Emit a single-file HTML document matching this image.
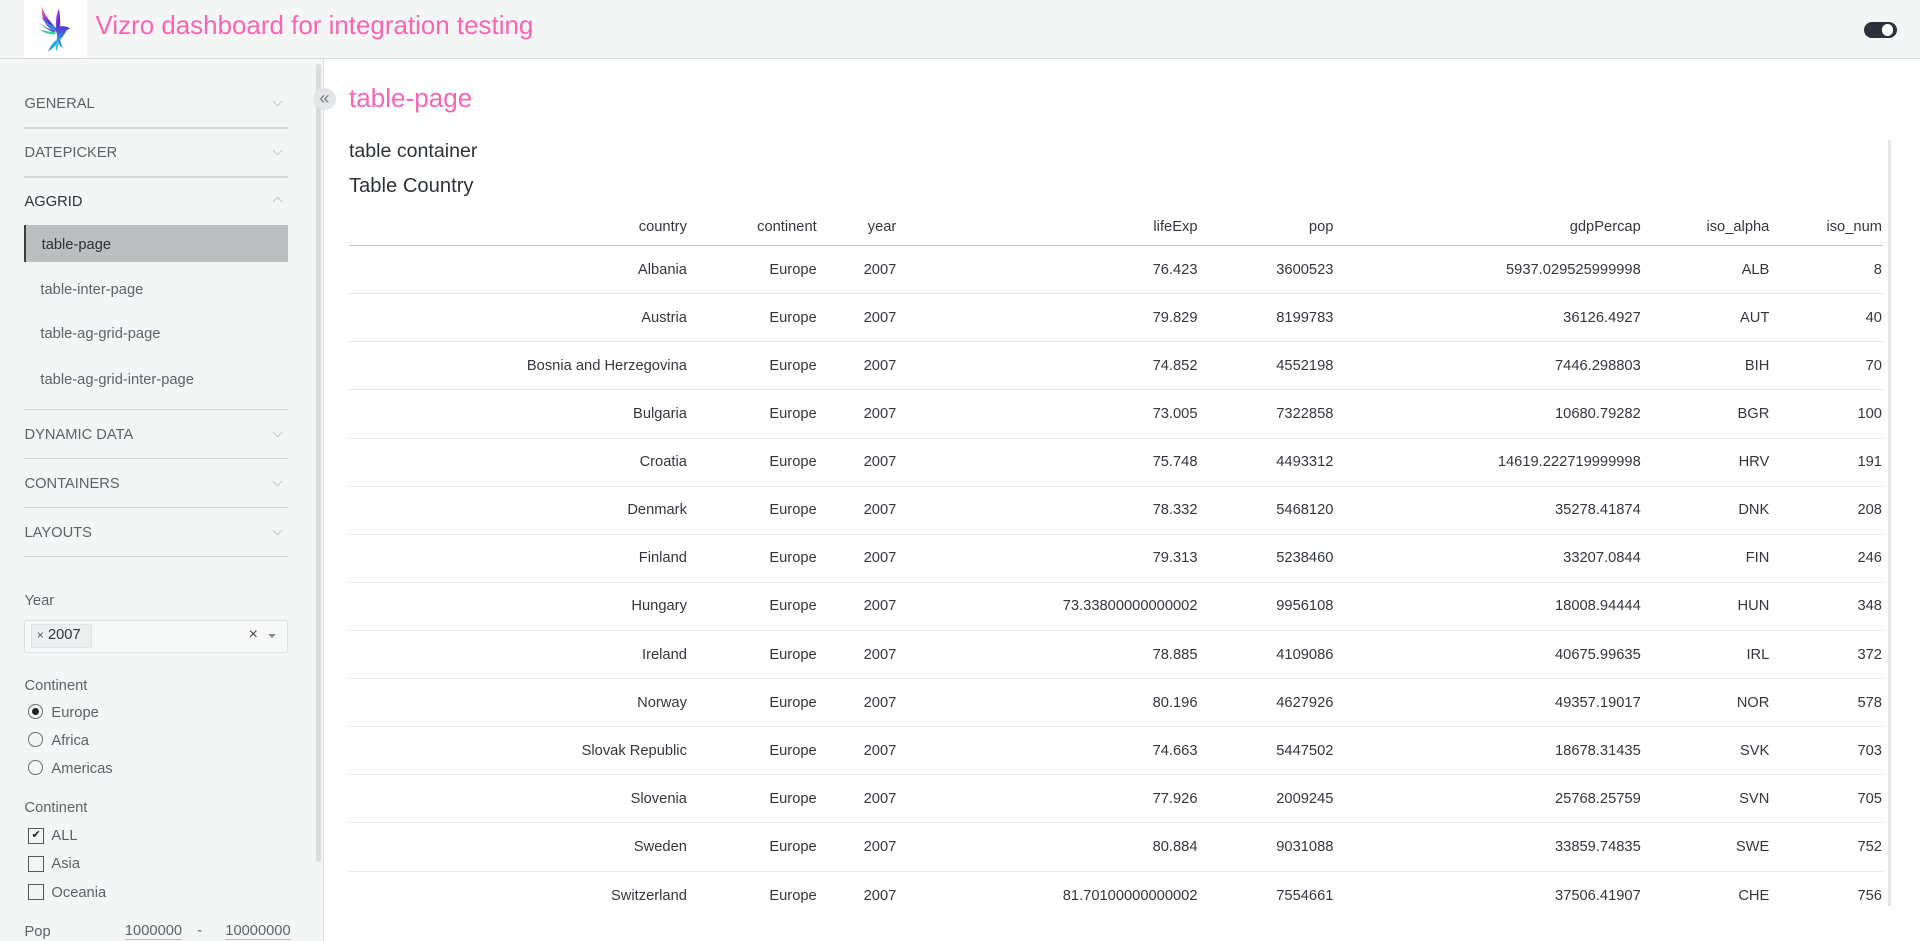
<!DOCTYPE html>
<html><head><meta charset="utf-8">
<style>
html,body{margin:0;padding:0;width:1920px;height:941px;overflow:hidden;background:#fff;}
#w{zoom:1.2245;width:1568px;height:769px;position:relative;font-family:"Liberation Sans",sans-serif;color:#33373d;overflow:hidden;}
.a{position:absolute;white-space:nowrap;}
#hdr{left:0;top:0;width:1568px;height:47px;background:#f4f5f5;border-bottom:1px solid #d8dadc;}
#side{left:0;top:48px;width:264px;height:721px;background:#f4f5f5;border-right:1px solid #dcdee0;}
.nav{left:20px;font-size:12px;color:#5d6168;transform:translateY(-50%);}
.ln{left:20px;width:215px;height:1px;background:#d5d7d9;}
.chev{left:224px;width:5px;height:5px;border-right:1px solid #c3c6ca;border-bottom:1px solid #c3c6ca;transform:rotate(45deg);}
.sub{left:33px;font-size:12px;color:#5d6168;transform:translateY(-50%);}
.lbl{left:20px;font-size:12px;color:#5d6168;transform:translateY(-50%);}
.opt{left:42px;font-size:12px;color:#5d6168;transform:translateY(-50%);}
.rad{left:23px;width:12px;height:12px;border:1px solid #6b6f76;border-radius:50%;box-sizing:border-box;}
.chk{left:23px;width:13px;height:13px;border:1px solid #55595f;box-sizing:border-box;}
#tbl{left:285px;top:170px;width:1253px;font-size:12px;color:#33373d;}
.r{display:flex;height:39.3px;align-items:center;border-bottom:1px solid #e6e7e9;box-sizing:border-box;}
.r.h{height:31px;border-bottom:1px solid #c4c6c9;}
.r div{text-align:right;padding-right:1px;box-sizing:border-box;}
.c1{width:277px}.c2{width:106px}.c3{width:65px}.c4{width:246px}.c5{width:111px}.c6{width:251px}.c7{width:105px}.c8{width:92px}
</style></head><body><div id="w">
<div id="hdr" class="a"></div>
<div class="a" style="left:20px;top:0;width:51px;height:47px;background:#fff;"></div>
<svg class="a" style="left:30px;top:4px" width="32" height="40" viewBox="0 0 32 40">
<defs><linearGradient id="g1" x1="0" y1="0" x2="1" y2="1"><stop offset="0" stop-color="#f7a23a"/><stop offset=".3" stop-color="#b040d8"/><stop offset=".65" stop-color="#4a2bd0"/><stop offset="1" stop-color="#28c0e0"/></linearGradient>
<linearGradient id="g2" x1="0" y1="0" x2="1" y2="0"><stop offset="0" stop-color="#30d0b0"/><stop offset="1" stop-color="#6a30d8"/></linearGradient>
<linearGradient id="g3" x1="0" y1="0" x2="0" y2="1"><stop offset="0" stop-color="#5a2fd6"/><stop offset="1" stop-color="#20b8e8"/></linearGradient></defs>
<path d="M4 1 C3 9 6 16 13 21 L15 18 C10 13 6 8 4 1Z" fill="url(#g1)"/>
<path d="M2 8 C6 14 10 19 15 21 L15 19 C10 16 5 12 2 8Z" fill="#3a8ae0"/>
<path d="M1 14 C5 18 10 21 15 23 L15 21 C10 20 5 17 1 14Z" fill="url(#g2)"/>
<path d="M2 20 C6 23 10 24 15 24 L15 22 C10 22 6 21 2 20Z" fill="#40d090"/>
<path d="M18 3 C15 9 15 15 16 20 L19 21 C19 14 19 9 18 3Z" fill="url(#g1)"/>
<path d="M14 19 C18 17 22 17 25 18 L27 19 L24 21 C22 25 19 29 15 31 C17 27 17 23 14 19Z" fill="url(#g3)"/>
<path d="M15 29 C12 32 10 35 9 38 C12 36 15 34 17 30Z" fill="#24a8e6"/>
<path d="M16 30 C15 33 15 36 16 38 C17 35 18 32 18 29Z" fill="#3bc6e0"/>
<path d="M17 29 C18 32 19 34 21 35 C20 32 19 30 19 28Z" fill="#2a90e0"/>
</svg>
<div class="a" style="left:78px;top:10px;font-size:21.2px;color:#f766b3;">Vizro dashboard for integration testing</div>
<div class="a" style="left:1522px;top:18px;width:27px;height:13px;border-radius:7px;background:#2d3139;"></div>
<div class="a" style="left:1537px;top:20px;width:9px;height:9px;border-radius:50%;background:#fff;"></div>

<div id="side" class="a"></div>
<div class="a" style="left:258px;top:52px;width:4px;height:652px;background:#d9dbdd;border-radius:2px;"></div>
<div class="a" style="left:256px;top:72px;width:18px;height:18px;border-radius:50%;background:#e3e5e8;color:#7b8087;font-size:15px;line-height:16px;text-align:center;">«</div>

<div class="a nav" style="top:85px">GENERAL</div><div class="a chev" style="top:80px"></div>
<div class="a ln" style="top:104px"></div>
<div class="a nav" style="top:125px">DATEPICKER</div><div class="a chev" style="top:120px"></div>
<div class="a ln" style="top:144px"></div>
<div class="a nav" style="top:165px;color:#2d3139">AGGRID</div><div class="a chev" style="top:162px;transform:rotate(225deg)"></div>
<div class="a" style="left:20px;top:184px;width:215px;height:30px;background:#bdbec0;border-left:2px solid #3a3d44;box-sizing:border-box;"></div>
<div class="a sub" style="top:200px;left:34px;color:#2d3139">table-page</div>
<div class="a sub" style="top:237px">table-inter-page</div>
<div class="a sub" style="top:273px">table-ag-grid-page</div>
<div class="a sub" style="top:310px">table-ag-grid-inter-page</div>
<div class="a ln" style="top:334px"></div>
<div class="a nav" style="top:355px">DYNAMIC DATA</div><div class="a chev" style="top:350px"></div>
<div class="a ln" style="top:374px"></div>
<div class="a nav" style="top:395px">CONTAINERS</div><div class="a chev" style="top:390px"></div>
<div class="a ln" style="top:414px"></div>
<div class="a nav" style="top:435px">LAYOUTS</div><div class="a chev" style="top:430px"></div>
<div class="a ln" style="top:454px"></div>

<div class="a lbl" style="top:491px">Year</div>
<div class="a" style="left:20px;top:506px;width:215px;height:27px;background:#f7f8f8;border:1px solid #dcdee0;box-sizing:border-box;border-radius:2px;"></div>
<div class="a" style="left:25px;top:510px;width:50px;height:19px;background:#eceef0;border:1px solid #e2e4e6;box-sizing:border-box;"></div>
<div class="a" style="left:30px;top:512px;font-size:12px;color:#33373d;"><span style="font-size:10px;color:#555">×</span> 2007</div>
<div class="a" style="left:203px;top:511px;font-size:13px;color:#444;">×</div>
<div class="a" style="left:219px;top:518px;width:0;height:0;border-left:4px solid transparent;border-right:4px solid transparent;border-top:4px solid #888;"></div>

<div class="a lbl" style="top:560px">Continent</div>
<div class="a rad" style="top:575px"></div><div class="a" style="left:26px;top:578px;width:6px;height:6px;border-radius:50%;background:#222"></div>
<div class="a opt" style="top:582px">Europe</div>
<div class="a rad" style="top:598px"></div><div class="a opt" style="top:605px">Africa</div>
<div class="a rad" style="top:621px"></div><div class="a opt" style="top:628px">Americas</div>

<div class="a lbl" style="top:660px">Continent</div>
<div class="a chk" style="top:676px;font-size:9px;line-height:11px;text-align:center;color:#222">✔</div><div class="a opt" style="top:683px">ALL</div>
<div class="a chk" style="top:699px"></div><div class="a opt" style="top:706px">Asia</div>
<div class="a chk" style="top:722px"></div><div class="a opt" style="top:729px">Oceania</div>
<div class="a lbl" style="top:761px">Pop</div>
<div class="a" style="left:102px;top:754px;font-size:12px;color:#5d6168;border-bottom:1px solid #bbb">1000000</div>
<div class="a" style="left:161px;top:754px;font-size:12px;color:#5d6168;">-</div>
<div class="a" style="left:184px;top:754px;font-size:12px;color:#5d6168;border-bottom:1px solid #bbb">10000000</div>

<div class="a" style="left:285px;top:68px;font-size:21.3px;color:#f766b3;">table-page</div>
<div class="a" style="left:285px;top:114px;font-size:16px;color:#2d3139;">table container</div>
<div class="a" style="left:285px;top:143px;font-size:16.5px;color:#2d3139;">Table Country</div>
<div class="a" style="left:1542px;top:114px;width:2px;height:626px;background:#e4e6e8;"></div>

<div id="tbl" class="a">
<div class="r h"><div class="c1">country</div><div class="c2">continent</div><div class="c3">year</div><div class="c4">lifeExp</div><div class="c5">pop</div><div class="c6">gdpPercap</div><div class="c7">iso_alpha</div><div class="c8">iso_num</div></div>
<div class="r"><div class="c1">Albania</div><div class="c2">Europe</div><div class="c3">2007</div><div class="c4">76.423</div><div class="c5">3600523</div><div class="c6">5937.029525999998</div><div class="c7">ALB</div><div class="c8">8</div></div>
<div class="r"><div class="c1">Austria</div><div class="c2">Europe</div><div class="c3">2007</div><div class="c4">79.829</div><div class="c5">8199783</div><div class="c6">36126.4927</div><div class="c7">AUT</div><div class="c8">40</div></div>
<div class="r"><div class="c1">Bosnia and Herzegovina</div><div class="c2">Europe</div><div class="c3">2007</div><div class="c4">74.852</div><div class="c5">4552198</div><div class="c6">7446.298803</div><div class="c7">BIH</div><div class="c8">70</div></div>
<div class="r"><div class="c1">Bulgaria</div><div class="c2">Europe</div><div class="c3">2007</div><div class="c4">73.005</div><div class="c5">7322858</div><div class="c6">10680.79282</div><div class="c7">BGR</div><div class="c8">100</div></div>
<div class="r"><div class="c1">Croatia</div><div class="c2">Europe</div><div class="c3">2007</div><div class="c4">75.748</div><div class="c5">4493312</div><div class="c6">14619.222719999998</div><div class="c7">HRV</div><div class="c8">191</div></div>
<div class="r"><div class="c1">Denmark</div><div class="c2">Europe</div><div class="c3">2007</div><div class="c4">78.332</div><div class="c5">5468120</div><div class="c6">35278.41874</div><div class="c7">DNK</div><div class="c8">208</div></div>
<div class="r"><div class="c1">Finland</div><div class="c2">Europe</div><div class="c3">2007</div><div class="c4">79.313</div><div class="c5">5238460</div><div class="c6">33207.0844</div><div class="c7">FIN</div><div class="c8">246</div></div>
<div class="r"><div class="c1">Hungary</div><div class="c2">Europe</div><div class="c3">2007</div><div class="c4">73.33800000000002</div><div class="c5">9956108</div><div class="c6">18008.94444</div><div class="c7">HUN</div><div class="c8">348</div></div>
<div class="r"><div class="c1">Ireland</div><div class="c2">Europe</div><div class="c3">2007</div><div class="c4">78.885</div><div class="c5">4109086</div><div class="c6">40675.99635</div><div class="c7">IRL</div><div class="c8">372</div></div>
<div class="r"><div class="c1">Norway</div><div class="c2">Europe</div><div class="c3">2007</div><div class="c4">80.196</div><div class="c5">4627926</div><div class="c6">49357.19017</div><div class="c7">NOR</div><div class="c8">578</div></div>
<div class="r"><div class="c1">Slovak Republic</div><div class="c2">Europe</div><div class="c3">2007</div><div class="c4">74.663</div><div class="c5">5447502</div><div class="c6">18678.31435</div><div class="c7">SVK</div><div class="c8">703</div></div>
<div class="r"><div class="c1">Slovenia</div><div class="c2">Europe</div><div class="c3">2007</div><div class="c4">77.926</div><div class="c5">2009245</div><div class="c6">25768.25759</div><div class="c7">SVN</div><div class="c8">705</div></div>
<div class="r"><div class="c1">Sweden</div><div class="c2">Europe</div><div class="c3">2007</div><div class="c4">80.884</div><div class="c5">9031088</div><div class="c6">33859.74835</div><div class="c7">SWE</div><div class="c8">752</div></div>
<div class="r" style="border-bottom:none"><div class="c1">Switzerland</div><div class="c2">Europe</div><div class="c3">2007</div><div class="c4">81.70100000000002</div><div class="c5">7554661</div><div class="c6">37506.41907</div><div class="c7">CHE</div><div class="c8">756</div></div>
</div>
</div></body></html>
